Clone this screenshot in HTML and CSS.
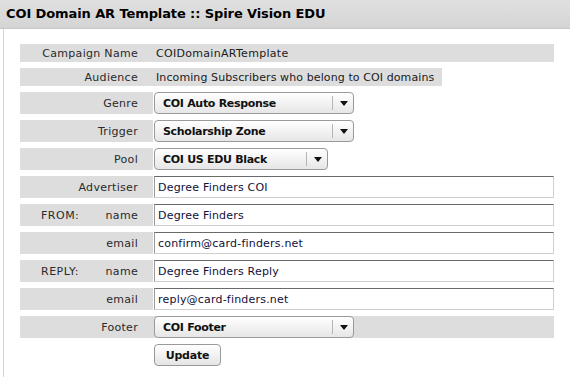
FILE: index.html
```html
<!DOCTYPE html>
<html>
<head>
<meta charset="utf-8">
<link rel="stylesheet" href="styles.css">
</head>
<body>
<div class="header"><h1 class="title">COI Domain AR Template :: Spire Vision EDU</h1></div>
<div class="panel">
  <div class="form">
    <div class="row row-text">
      <div class="label">Campaign Name</div>
      <div class="value value-fill">COIDomainARTemplate</div>
    </div>
    <div class="row row-text">
      <div class="label">Audience</div>
      <div class="value value-tight">Incoming Subscribers who belong to COI domains</div>
    </div>
    <div class="row">
      <div class="label">Genre</div>
      <div class="select select-wide"><span class="select-text">COI Auto Response</span><span class="select-arrow"><span class="tri"></span></span></div>
    </div>
    <div class="row">
      <div class="label">Trigger</div>
      <div class="select select-wide"><span class="select-text">Scholarship Zone</span><span class="select-arrow"><span class="tri"></span></span></div>
    </div>
    <div class="row">
      <div class="label">Pool</div>
      <div class="select select-narrow"><span class="select-text">COI US EDU Black</span><span class="select-arrow"><span class="tri"></span></span></div>
    </div>
    <div class="row">
      <div class="label">Advertiser</div>
      <div class="input">Degree Finders COI</div>
    </div>
    <div class="row">
      <div class="label label-split"><span class="group">FROM:</span><span>name</span></div>
      <div class="input">Degree Finders</div>
    </div>
    <div class="row">
      <div class="label">email</div>
      <div class="input">confirm@card-finders.net</div>
    </div>
    <div class="row">
      <div class="label label-split"><span class="group">REPLY:</span><span>name</span></div>
      <div class="input">Degree Finders Reply</div>
    </div>
    <div class="row">
      <div class="label">email</div>
      <div class="input">reply@card-finders.net</div>
    </div>
    <div class="row row-gray">
      <div class="label">Footer</div>
      <div class="select select-wide"><span class="select-text">COI Footer</span><span class="select-arrow"><span class="tri"></span></span></div>
    </div>
    <div class="row row-button">
      <div class="spacer"></div>
      <div class="button">Update</div>
    </div>
  </div>
</div>
</body>
</html>
```
FILE: styles.css
```css
html, body {
  margin: 0;
  padding: 0;
  background: #fff;
  font-family: "DejaVu Sans", Verdana, sans-serif;
}
.header {
  height: 29px;
  background: linear-gradient(#e0e0e0, #d4d4d4);
  border-bottom: 1px solid #c8c8c8;
  box-sizing: border-box;
  padding-left: 6px;
  display: flex;
  align-items: center;
}
.title {
  margin: 0;
  font-size: 13px;
  font-weight: bold;
  color: #000;
  letter-spacing: -0.1px;
  padding-bottom: 2px;
}
.panel {
  margin-left: 3px;
  border-left: 1px solid #d4d4d4;
  padding: 15px 0 0 16px;
  height: 348px;
  box-sizing: border-box;
}
.form {
  width: 534px;
  display: flex;
  flex-direction: column;
  gap: 6px;
}
.row {
  display: flex;
  align-items: stretch;
  height: 22px;
}
.row-text {
  height: 18px;
}
.row-gray {
  background: #dddddd;
}
.label {
  width: 133px;
  flex: none;
  background: #dddddd;
  box-sizing: border-box;
  padding-right: 15px;
  text-align: right;
  font-size: 11px;
  letter-spacing: 0.3px;
  color: #2a2a2a;
  display: flex;
  align-items: center;
  justify-content: flex-end;
}
.label-split {
  justify-content: space-between;
  padding-left: 21px;
}
.group {
  letter-spacing: 0.5px;
}
.value {
  background: #dddddd;
  font-size: 11px;
  color: #1a1a1a;
  letter-spacing: 0.3px;
  padding: 0 8px 0 3px;
  display: flex;
  align-items: center;
}
.value-fill {
  flex: 1;
}
.value-tight {
  letter-spacing: 0.1px;
}
.select {
  margin-left: 1px;
  height: 22px;
  box-sizing: border-box;
  border: 1px solid #9a9a9a;
  border-radius: 4px;
  background: linear-gradient(#ffffff, #e6e6e6);
  display: flex;
  align-items: center;
  font-size: 11px;
  font-weight: bold;
  letter-spacing: -0.3px;
  color: #111;
}
.select-wide {
  width: 200px;
}
.select-narrow {
  width: 174px;
}
.select-text {
  flex: 1;
  padding-left: 8px;
}
.select-arrow {
  width: 20px;
  height: 14px;
  border-left: 1px solid #b5b5b5;
  display: flex;
  align-items: center;
  justify-content: center;
}
.tri {
  width: 0;
  height: 0;
  border-left: 4px solid transparent;
  border-right: 4px solid transparent;
  border-top: 5px solid #111;
  margin-left: 1px;
}
.input {
  margin-left: 1px;
  width: 400px;
  height: 22px;
  box-sizing: border-box;
  background: #fff;
  border-top: 1px solid #6a6a6a;
  border-left: 1px solid #9a9a9a;
  border-right: 1px solid #cfcfcf;
  border-bottom: 1px solid #cfcfcf;
  font-size: 11px;
  color: #10103a;
  padding-left: 3px;
  letter-spacing: 0.2px;
  display: flex;
  align-items: center;
}
.spacer {
  width: 133px;
  flex: none;
}
.button {
  margin-left: 1px;
  width: 67px;
  height: 22px;
  box-sizing: border-box;
  border: 1px solid #9a9a9a;
  border-radius: 4px;
  background: linear-gradient(#ffffff, #e4e4e4);
  font-size: 11px;
  font-weight: bold;
  letter-spacing: -0.2px;
  color: #111;
  display: flex;
  align-items: center;
  justify-content: center;
}
```
